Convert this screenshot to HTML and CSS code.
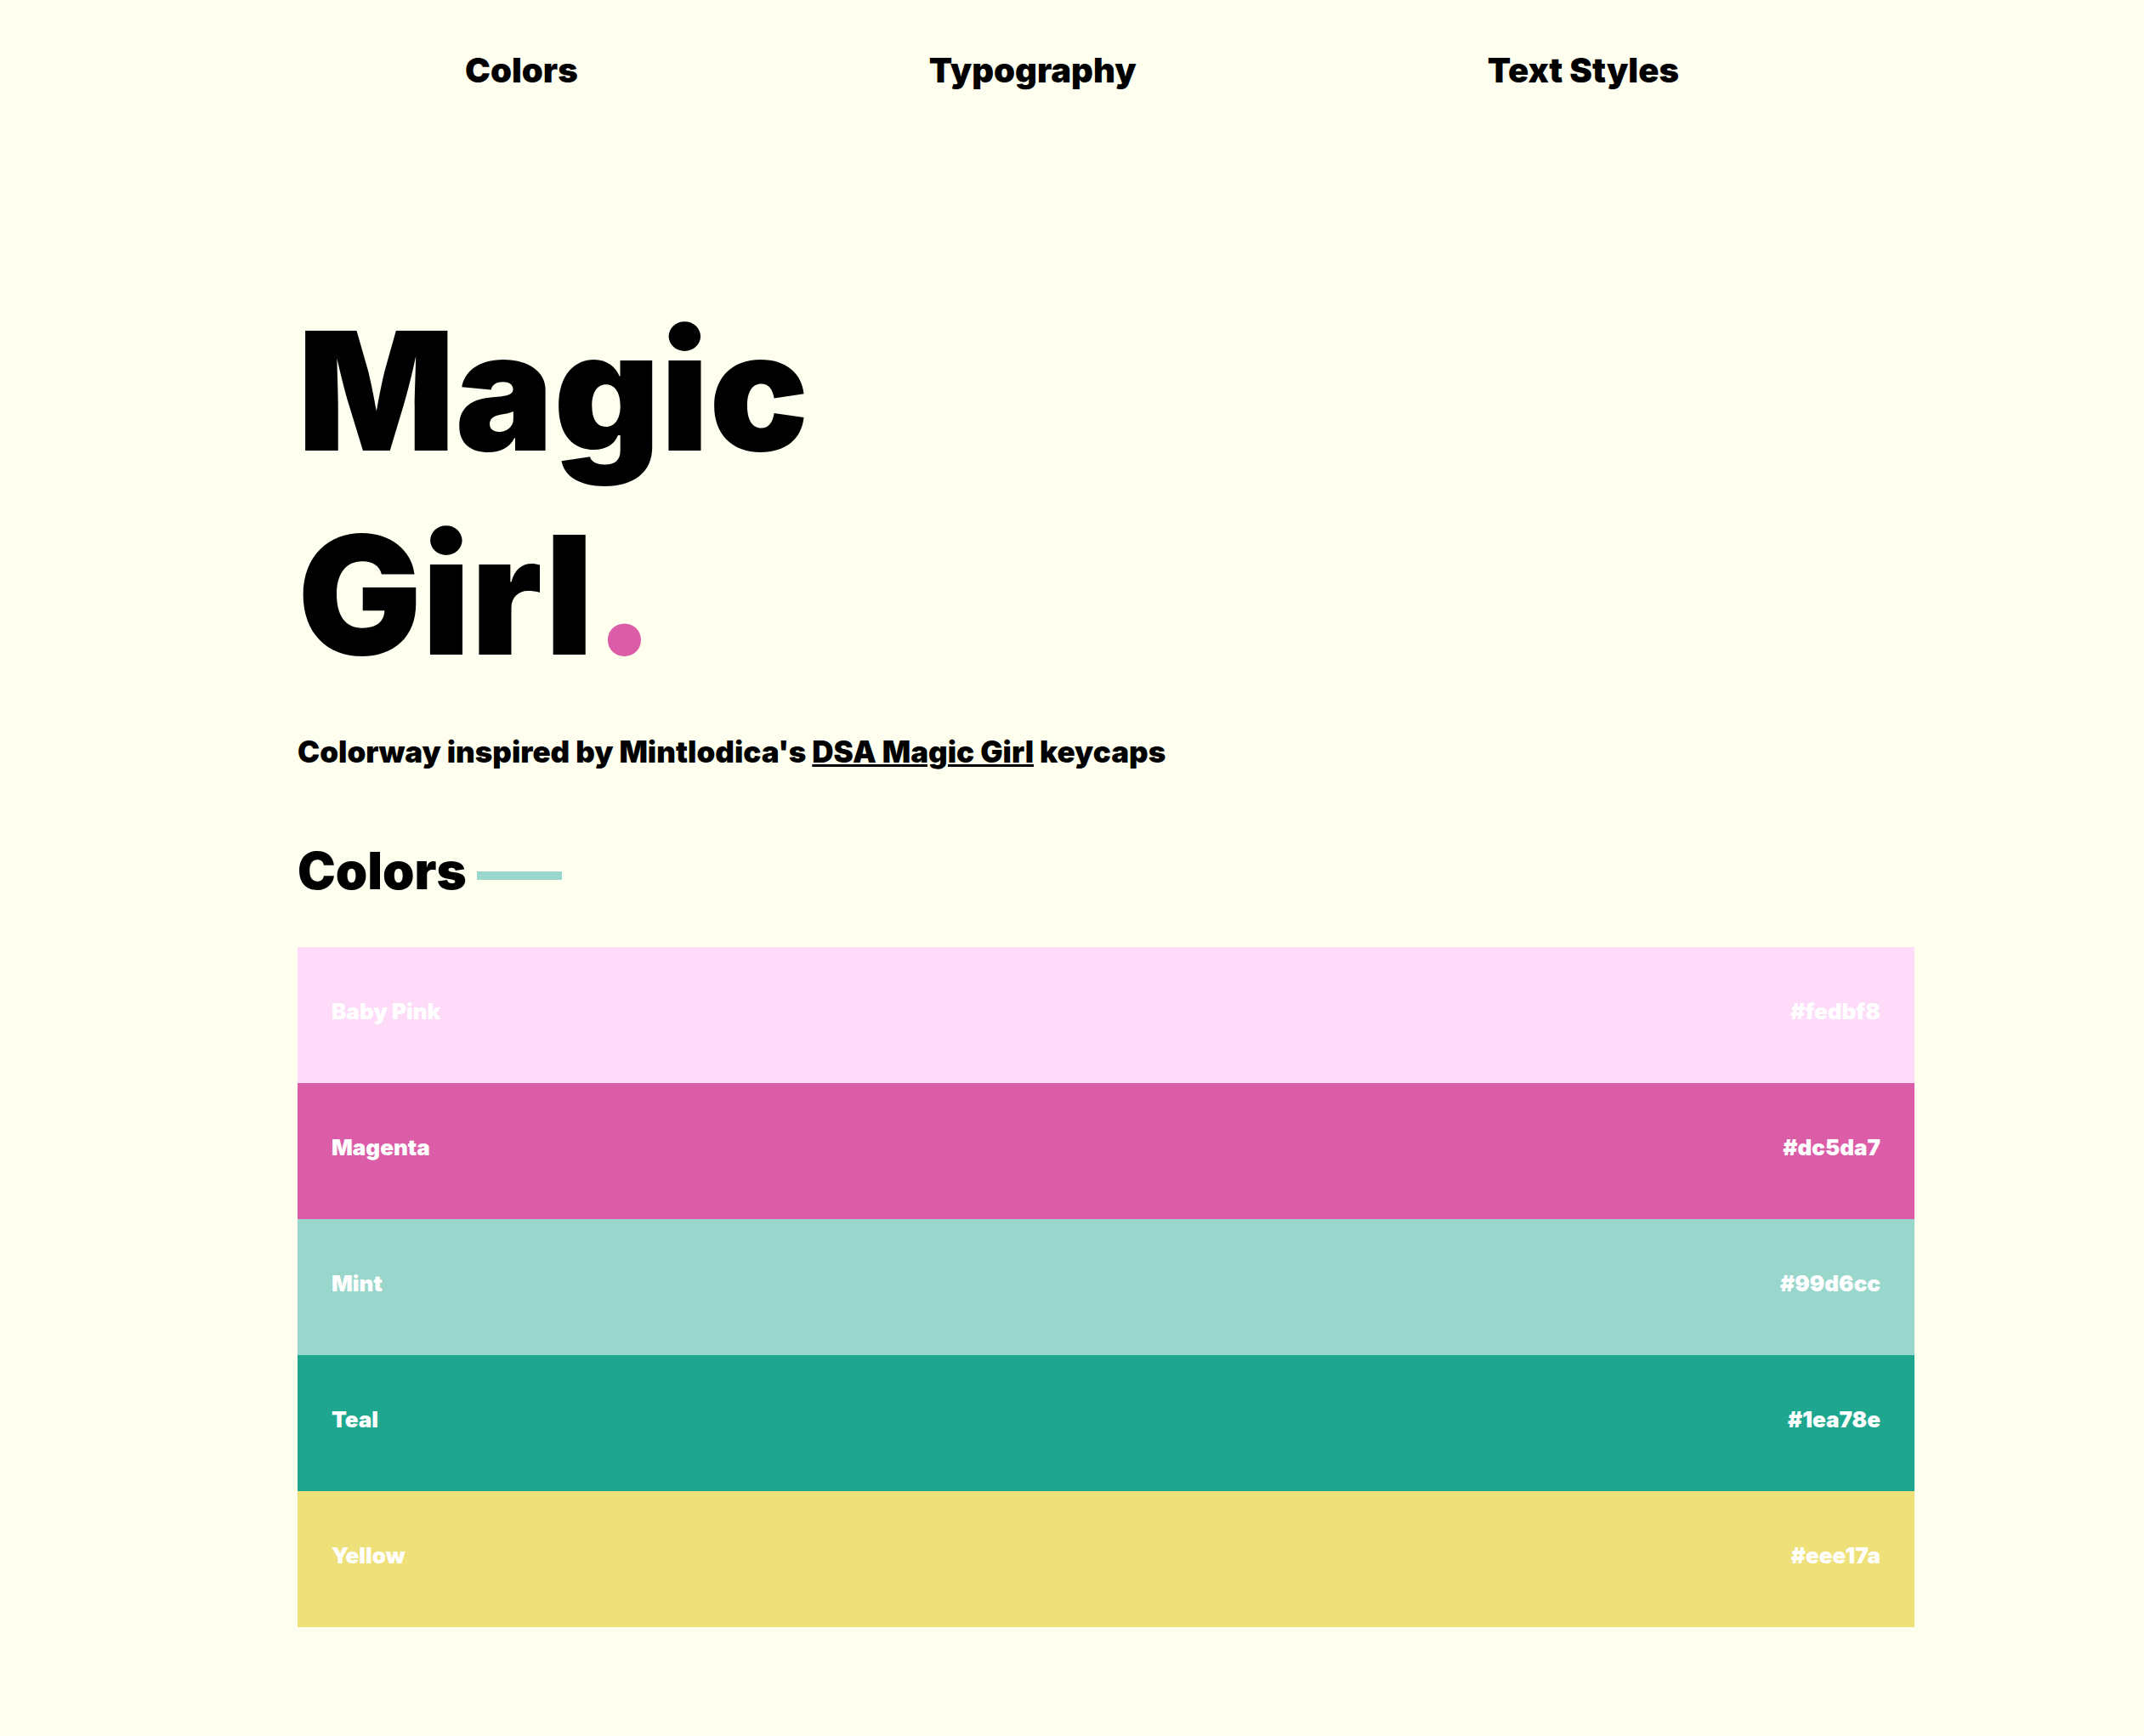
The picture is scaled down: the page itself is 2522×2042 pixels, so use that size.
FILE: index.html
```html
<!DOCTYPE html>
<html lang="en">
<head>
  <meta charset="utf-8">
  <meta name="viewport" content="width=device-width, initial-scale=1">
  <title>Magic Girl</title>
  <link rel="stylesheet" href="styles.css">
</head>
<body>
  <nav class="nav">
    <a class="nav-link" href="#colors">Colors</a>
    <a class="nav-link" href="#typography">Typography</a>
    <a class="nav-link" href="#text-styles">Text Styles</a>
  </nav>
  <main class="content">
    <h1 class="title">Magic<br>Girl<span class="title-dot">.</span></h1>
    <p class="tagline">Colorway inspired by Mintlodica's <a class="tagline-link" href="#keycaps">DSA Magic Girl</a> keycaps</p>
    <section id="colors">
      <h2 class="heading">Colors</h2>
      <ul class="swatches">
        <li class="swatch baby-pink"><span>Baby Pink</span><span>#fedbf8</span></li>
        <li class="swatch magenta"><span>Magenta</span><span>#dc5da7</span></li>
        <li class="swatch mint"><span>Mint</span><span>#99d6cc</span></li>
        <li class="swatch teal"><span>Teal</span><span>#1ea78e</span></li>
        <li class="swatch yellow"><span>Yellow</span><span>#eee17a</span></li>
      </ul>
    </section>
  </main>
</body>
</html>
```
FILE: styles.css
```css
* {
  box-sizing: border-box;
}

body {
  margin: 0;
  background: #fffff0;
  color: #000;
  font-family: Inter, "Open Sans", sans-serif;
  font-weight: 900;
}

.nav {
  display: flex;
  justify-content: space-around;
  width: 73%;
  margin: 0 auto;
  padding: 56px 0;
}

.nav-link {
  color: inherit;
  font-size: 40px;
  line-height: 54px;
  text-decoration: none;
}

.content {
  margin: 174px 270px 128px 350px;
}

.title {
  margin: 0;
  font-size: 194px;
  font-weight: 900;
  line-height: 240px;
}

.title-dot {
  color: #dc5da7;
}

.tagline {
  margin: 44px 0 84px;
  font-size: 35px;
  line-height: 40px;
}

.tagline-link {
  color: inherit;
  text-decoration-thickness: 3px;
}

.heading {
  display: flex;
  align-items: center;
  gap: 12px;
  margin: 0 0 54px;
  font-size: 60px;
  font-weight: 900;
  line-height: 72px;
}

.heading::after {
  content: "";
  width: 100px;
  height: 10px;
  margin-top: 12px;
  background: #99d6cc;
}

.swatches {
  margin: 0;
  padding: 0;
  list-style: none;
}

.swatch {
  display: flex;
  justify-content: space-between;
  padding: 56px 40px 64px;
  color: #fff;
  font-size: 26px;
  line-height: 40px;
}

.baby-pink {
  background: #fedbf8;
}

.magenta {
  background: #dc5da7;
}

.mint {
  background: #99d6cc;
}

.teal {
  background: #1ea78e;
}

.yellow {
  background: #eee17a;
}
```
